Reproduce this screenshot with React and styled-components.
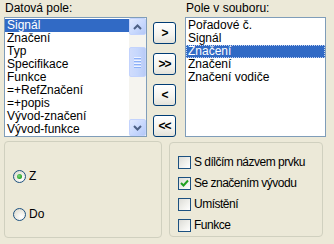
import React from 'react';
import styled, { createGlobalStyle } from 'styled-components';

const Global = createGlobalStyle`
  html, body {
    margin: 0;
    padding: 0;
    background: #ece9d8;
  }
  body {
    font-family: "Liberation Sans", Arial, sans-serif;
    font-size: 12px;
    color: #000;
  }
`;

const Dialog = styled.div`
  width: 334px;
  height: 244px;
  box-sizing: border-box;
  background: #ece9d8;
  overflow: hidden;
`;

const Top = styled.div`
  display: flex;
  padding-left: 4px;
`;

const Column = styled.div`
  width: ${p => p.width}px;
  margin-left: ${p => p.offset || 0}px;
  display: flex;
  flex-direction: column;
`;

const Label = styled.div`
  height: 17px;
  line-height: 16px;
  padding-left: 1px;
`;

const ListBox = styled.div`
  height: 120px;
  box-sizing: border-box;
  border: 1px solid #7f9db9;
  background: #fff;
  display: flex;
`;

const Items = styled.div`
  flex: 1;
  padding-top: 1px;
  overflow: hidden;
`;

const Item = styled.div`
  height: 13px;
  line-height: 13px;
  padding-left: 2px;
  white-space: nowrap;
  box-sizing: border-box;
  background: ${p => (p.selected ? '#316ac5' : 'transparent')};
  color: ${p => (p.selected ? '#fff' : '#000')};
  outline: ${p => (p.focused ? '1px dotted #c7d4f0' : 'none')};
  outline-offset: -1px;
`;

const ScrollBar = styled.div`
  width: 17px;
  display: flex;
  flex-direction: column;
  background: #f5f4ef;
`;

const ScrollButton = styled.div`
  height: 17px;
  box-sizing: border-box;
  border: 1px solid #c3d3fd;
  border-radius: 2px;
  background: linear-gradient(135deg, #e2eafe 0%, #c6d7fd 60%, #b4c8f6 100%);
  display: flex;
  align-items: center;
  justify-content: center;
`;

const Track = styled.div`
  flex: 1;
  position: relative;
`;

const Thumb = styled.div`
  position: absolute;
  left: 0;
  right: 0;
  top: 12px;
  height: 30px;
  box-sizing: border-box;
  border: 1px solid #c3d3fd;
  border-radius: 2px;
  background: linear-gradient(90deg, #d0dcfc 0%, #c6d7fd 50%, #b9cbf6 100%);
  display: flex;
  flex-direction: column;
  align-items: center;
  justify-content: center;
  gap: 1px;
`;

const Grip = styled.div`
  width: 7px;
  height: 1px;
  background: #eef3ff;
  border-bottom: 1px solid #8cb0f8;
`;

const Buttons = styled.div`
  width: 23px;
  margin-left: 6px;
  padding-top: 22px;
  display: flex;
  flex-direction: column;
  gap: 9px;
`;

const MoveButton = styled.div`
  width: 23px;
  height: 22px;
  box-sizing: border-box;
  border: 1px solid #003c74;
  border-radius: 3px;
  background: linear-gradient(180deg, #ffffff 0%, #f4f3ee 60%, #e3e2da 100%);
  display: flex;
  align-items: center;
  justify-content: center;
  font-size: 12px;
  letter-spacing: -1px;
  font-weight: bold;
  padding-bottom: 1px;
`;

const Bottom = styled.div`
  display: flex;
  padding-left: 4px;
  margin-top: 4px;
`;

const Group = styled.div`
  width: ${p => p.width}px;
  height: ${p => p.height}px;
  margin-left: ${p => p.offset || 0}px;
  margin-top: ${p => p.top || 0}px;
  box-sizing: border-box;
  border: 1px solid #d0d0bf;
  border-radius: 4px;
  display: flex;
  flex-direction: column;
  padding-left: 8px;
  padding-top: ${p => p.padTop}px;
  gap: ${p => p.gap}px;
`;

const OptionRow = styled.div`
  display: flex;
  align-items: center;
  height: 14px;
  gap: 3px;
  letter-spacing: ${p => (p.tight ? '-0.5px' : '0')};
`;

const RadioCircle = styled.div`
  width: 13px;
  height: 13px;
  box-sizing: border-box;
  border-radius: 50%;
  border: 1px solid #1c5180;
  background: radial-gradient(circle at 65% 70%, #ffffff 0%, #f0efe9 40%, #d7d4c6 100%);
  display: flex;
  align-items: center;
  justify-content: center;
`;

const RadioDot = styled.div`
  width: 5px;
  height: 5px;
  border-radius: 50%;
  background: radial-gradient(circle at 40% 40%, #7fd67f 0%, #21a121 70%);
`;

const CheckBox = styled.div`
  width: 13px;
  height: 13px;
  box-sizing: border-box;
  border: 1px solid #1c5180;
  background: linear-gradient(135deg, #dcdcd7 0%, #f2f2ee 60%, #ffffff 100%);
  display: flex;
  align-items: center;
  justify-content: center;
`;

const Arrow = ({ up }) => (
  <svg width="9" height="6" viewBox="0 0 9 6">
    <path
      d={up ? 'M1 5 L4.5 1.5 L8 5' : 'M1 1 L4.5 4.5 L8 1'}
      fill="none"
      stroke="#4d6185"
      strokeWidth="2"
    />
  </svg>
);

const Check = () => (
  <svg width="9" height="9" viewBox="0 0 9 9">
    <path d="M1 4 L3.5 6.5 L8 1.5" fill="none" stroke="#21a121" strokeWidth="2" />
  </svg>
);

const sourceFields = [
  'Signál',
  'Značení',
  'Typ',
  'Specifikace',
  'Funkce',
  '=+RefZnačení',
  '=+popis',
  'Vývod-značení',
  'Vývod-funkce',
];

const fileFields = ['Pořadové č.', 'Signál', 'Značení', 'Značení', 'Značení vodiče'];

const options = [
  { label: 'S dílčím názvem prvku', checked: false },
  { label: 'Se značením vývodu', checked: true },
  { label: 'Umístění', checked: false },
  { label: 'Funkce', checked: false },
];

export default function App() {
  return (
    <Dialog>
      <Global />
      <Top>
        <Column width={143}>
          <Label>Datová pole:</Label>
          <ListBox>
            <Items>
              {sourceFields.map((f, i) => (
                <Item key={f} selected={i === 0}>
                  {f}
                </Item>
              ))}
            </Items>
            <ScrollBar>
              <ScrollButton>
                <Arrow up />
              </ScrollButton>
              <Track>
                <Thumb>
                  <Grip />
                  <Grip />
                  <Grip />
                  <Grip />
                </Thumb>
              </Track>
              <ScrollButton>
                <Arrow />
              </ScrollButton>
            </ScrollBar>
          </ListBox>
        </Column>
        <Buttons>
          <MoveButton>&gt;</MoveButton>
          <MoveButton>&gt;&gt;</MoveButton>
          <MoveButton>&lt;</MoveButton>
          <MoveButton>&lt;&lt;</MoveButton>
        </Buttons>
        <Column width={141} offset={9}>
          <Label>Pole v souboru:</Label>
          <ListBox>
            <Items>
              {fileFields.map((f, i) => (
                <Item key={i} selected={i === 2} focused={i === 2}>
                  {f}
                </Item>
              ))}
            </Items>
          </ListBox>
        </Column>
      </Top>
      <Bottom>
        <Group width={158} height={97} padTop={27} gap={24}>
          <OptionRow>
            <RadioCircle>
              <RadioDot />
            </RadioCircle>
            Z
          </OptionRow>
          <OptionRow>
            <RadioCircle />
            Do
          </OptionRow>
        </Group>
        <Group width={154} height={95} offset={7} top={1} padTop={12} gap={7}>
          {options.map(o => (
            <OptionRow key={o.label} tight>
              <CheckBox>{o.checked && <Check />}</CheckBox>
              {o.label}
            </OptionRow>
          ))}
        </Group>
      </Bottom>
    </Dialog>
  );
}
